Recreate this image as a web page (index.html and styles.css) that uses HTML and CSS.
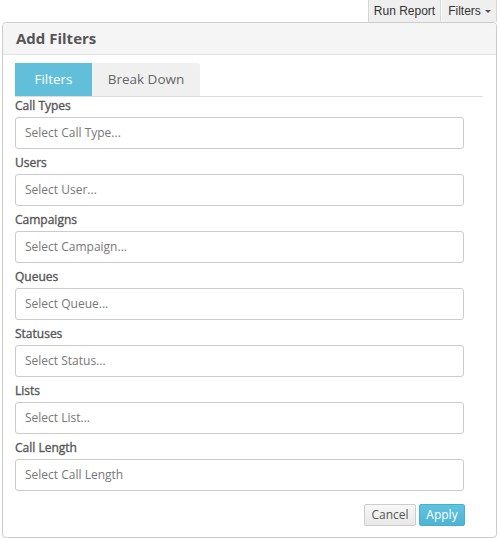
FILE: index.html
```html
<!DOCTYPE html>
<html>
<head>
<meta charset="utf-8">
<link rel="stylesheet" href="styles.css">
</head>
<body>
<div class="toolbar">
  <button class="tb-btn run">Run Report</button>
  <button class="tb-btn filt">Filters <span class="caret"></span></button>
</div>
<div class="panel">
  <div class="panel-header">Add Filters</div>
  <div class="panel-body">
    <div class="tabs">
      <div class="tab active">Filters</div>
      <div class="tab">Break Down</div>
    </div>
    <div class="form">
      <div class="group"><label class="lbl">Call Types</label><div class="input">Select Call Type...</div></div>
      <div class="group"><label class="lbl">Users</label><div class="input">Select User...</div></div>
      <div class="group"><label class="lbl">Campaigns</label><div class="input">Select Campaign...</div></div>
      <div class="group"><label class="lbl">Queues</label><div class="input">Select Queue...</div></div>
      <div class="group"><label class="lbl">Statuses</label><div class="input">Select Status...</div></div>
      <div class="group"><label class="lbl">Lists</label><div class="input">Select List...</div></div>
      <div class="group"><label class="lbl">Call Length</label><div class="input">Select Call Length</div></div>
      <div class="actions">
        <button class="btn btn-cancel">Cancel</button>
        <button class="btn btn-apply">Apply</button>
      </div>
    </div>
  </div>
</div>
</body>
</html>
```
FILE: styles.css
```css
* { box-sizing: border-box; }
html, body { margin: 0; padding: 0; background: #fff; }
body { font-family: "Open Sans", sans-serif; color: #555; width: 499px; height: 538px; overflow: hidden; }

.toolbar { display: flex; justify-content: flex-end; height: 22px; padding-right: 2px; }
.tb-btn {
  font-family: "Liberation Sans", Arial, sans-serif; font-size: 12px; color: #333;
  background: #efefef; border: 1px solid #d6d6d6; border-top: none; border-bottom: none;
  height: 22px; padding: 0; margin: 0; line-height: 22px;
  display: flex; align-items: center; justify-content: center; gap: 4px;
}
.tb-btn.run { width: 73px; }
.tb-btn.filt { width: 56px; border-left: 1px solid #fff; padding-left: 1px; }
.caret { width: 0; height: 0; border-left: 3px solid transparent; border-right: 3px solid transparent; border-top: 3px solid #555; display: inline-block; }

.panel {
  margin: 0 2px 0 2px; height: 516px; border: 1px solid #ccc; border-radius: 4px;
  box-shadow: 0 1px 1px rgba(0,0,0,0.05);
}
.panel-header {
  height: 32px; background: #f5f5f5; border-bottom: 1px solid #e2e2e2;
  border-radius: 3px 3px 0 0;
  font-weight: 700; font-size: 15px; color: #555; padding-left: 13px; line-height: 31px;
}
.panel-body { padding: 8px 13px 0 12px; }
.tabs { display: flex; border-bottom: 1px solid #ddd; height: 34px; }
.tab {
  height: 33px; line-height: 33px; font-size: 13.5px; color: #666; width: 108px; text-align: center;
  background: #f0f0f0; border-radius: 0 3px 0 0;
}
.tab.active { background: #62bfd9; color: #fff; border-radius: 0; width: 77px; }
.form { padding-right: 19px; }
.group { display: flex; flex-direction: column; margin-bottom: 5px; }
.lbl { font-size: 12px; font-weight: 400; color: #555; -webkit-text-stroke: 0.35px #555; height: 17px; line-height: 17px; margin-bottom: 3px; }
.input {
  height: 32px; border: 1px solid #ccc; border-radius: 3px; font-size: 12px; color: #777;
  padding-left: 9px; line-height: 30px;
}
.actions { display: flex; justify-content: flex-end; gap: 3px; margin-top: 13px; margin-right: -1px; }
.btn {
  font-family: "Open Sans", sans-serif; font-size: 12px; height: 22px; padding: 0;
  border-radius: 2px; line-height: 20px; margin: 0; text-align: center;
}
.btn-cancel { background: linear-gradient(#f7f7f7, #e8e8e8); border: 1px solid #ccc; color: #555; width: 52px; }
.btn-apply { background: linear-gradient(#62c3df, #4eb4d4); border: 1px solid #46b0d2; color: #fff; width: 46px; }
```
